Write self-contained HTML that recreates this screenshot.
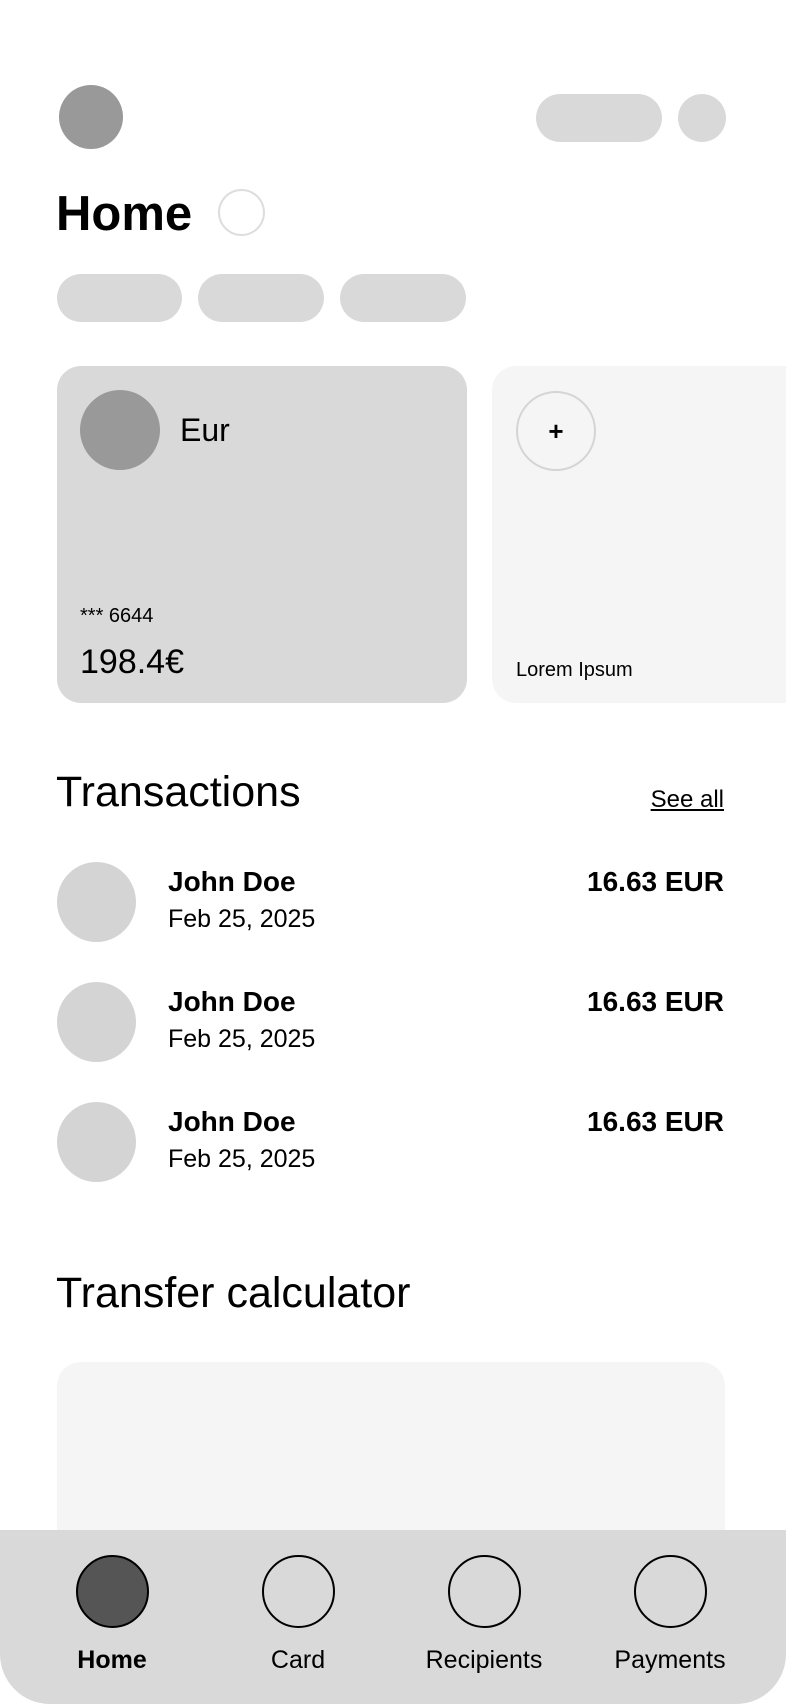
<!DOCTYPE html>
<html><head><meta charset="utf-8"><style>
*{margin:0;padding:0;box-sizing:border-box}
body{width:786px;height:1704px;background:#fff;position:relative;overflow:hidden;font-family:"Liberation Sans",sans-serif;color:#000}
.a{position:absolute}
.c{border-radius:50%}
.t{position:absolute;white-space:nowrap;line-height:1}
</style></head><body>
<div class="a c" style="left:59px;top:85px;width:64px;height:64px;background:#999"></div>
<div class="a" style="left:536px;top:94px;width:126px;height:48px;border-radius:24px;background:#d9d9d9"></div>
<div class="a c" style="left:678px;top:94px;width:48px;height:48px;background:#d9d9d9"></div>
<div class="t" style="left:56px;top:190px;font-size:49px;font-weight:bold">Home</div>
<div class="a c" style="left:218px;top:189px;width:47px;height:47px;border:2px solid #ddd"></div>
<div class="a" style="left:57px;top:274px;width:125px;height:48px;border-radius:24px;background:#d9d9d9"></div>
<div class="a" style="left:198px;top:274px;width:126px;height:48px;border-radius:24px;background:#d9d9d9"></div>
<div class="a" style="left:340px;top:274px;width:126px;height:48px;border-radius:24px;background:#d9d9d9"></div>

<div class="a" style="left:57px;top:366px;width:410px;height:337px;border-radius:24px;background:#d9d9d9"></div>
<div class="a c" style="left:80px;top:390px;width:80px;height:80px;background:#999"></div>
<div class="t" style="left:180px;top:414px;font-size:32px">Eur</div>
<div class="t" style="left:80px;top:606px;font-size:20px">*** 6644</div>
<div class="t" style="left:80px;top:645px;font-size:34px">198.4€</div>

<div class="a" style="left:492px;top:366px;width:320px;height:337px;border-radius:24px;background:#f5f5f5"></div>
<div class="a c" style="left:516px;top:391px;width:80px;height:80px;border:2px solid #d4d4d4"></div>
<div class="t" style="left:516px;top:418px;width:80px;text-align:center;font-size:26px;font-weight:bold">+</div>
<div class="t" style="left:516px;top:660px;font-size:20px">Lorem Ipsum</div>

<div class="t" style="left:56px;top:771px;font-size:43px">Transactions</div>
<div class="t" style="right:62px;top:788px;font-size:24px;text-decoration:underline">See all</div>

<div class="a c" style="left:57px;top:862px;width:79px;height:80px;background:#d4d4d4"></div>
<div class="t" style="left:168px;top:868px;font-size:28px;font-weight:bold">John Doe</div>
<div class="t" style="left:168px;top:907px;font-size:25px">Feb 25, 2025</div>
<div class="t" style="right:62px;top:868px;font-size:28px;font-weight:bold">16.63 EUR</div>

<div class="a c" style="left:57px;top:982px;width:79px;height:80px;background:#d4d4d4"></div>
<div class="t" style="left:168px;top:988px;font-size:28px;font-weight:bold">John Doe</div>
<div class="t" style="left:168px;top:1027px;font-size:25px">Feb 25, 2025</div>
<div class="t" style="right:62px;top:988px;font-size:28px;font-weight:bold">16.63 EUR</div>

<div class="a c" style="left:57px;top:1102px;width:79px;height:80px;background:#d4d4d4"></div>
<div class="t" style="left:168px;top:1108px;font-size:28px;font-weight:bold">John Doe</div>
<div class="t" style="left:168px;top:1147px;font-size:25px">Feb 25, 2025</div>
<div class="t" style="right:62px;top:1108px;font-size:28px;font-weight:bold">16.63 EUR</div>

<div class="t" style="left:56px;top:1272px;font-size:43px">Transfer calculator</div>
<div class="a" style="left:57px;top:1362px;width:668px;height:250px;border-radius:24px;background:#f5f5f5"></div>

<div class="a" style="left:0;top:1530px;width:786px;height:174px;background:#d9d9d9;border-radius:0 0 50px 50px"></div>
<div class="a c" style="left:76px;top:1555px;width:73px;height:73px;background:#555;border:2px solid #000"></div>
<div class="a c" style="left:262px;top:1555px;width:73px;height:73px;border:2px solid #000"></div>
<div class="a c" style="left:448px;top:1555px;width:73px;height:73px;border:2px solid #000"></div>
<div class="a c" style="left:634px;top:1555px;width:73px;height:73px;border:2px solid #000"></div>
<div class="t" style="left:32px;width:160px;text-align:center;top:1648px;font-size:25px;font-weight:bold">Home</div>
<div class="t" style="left:218px;width:160px;text-align:center;top:1648px;font-size:25px">Card</div>
<div class="t" style="left:404px;width:160px;text-align:center;top:1648px;font-size:25px">Recipients</div>
<div class="t" style="left:590px;width:160px;text-align:center;top:1648px;font-size:25px">Payments</div>
</body></html>
